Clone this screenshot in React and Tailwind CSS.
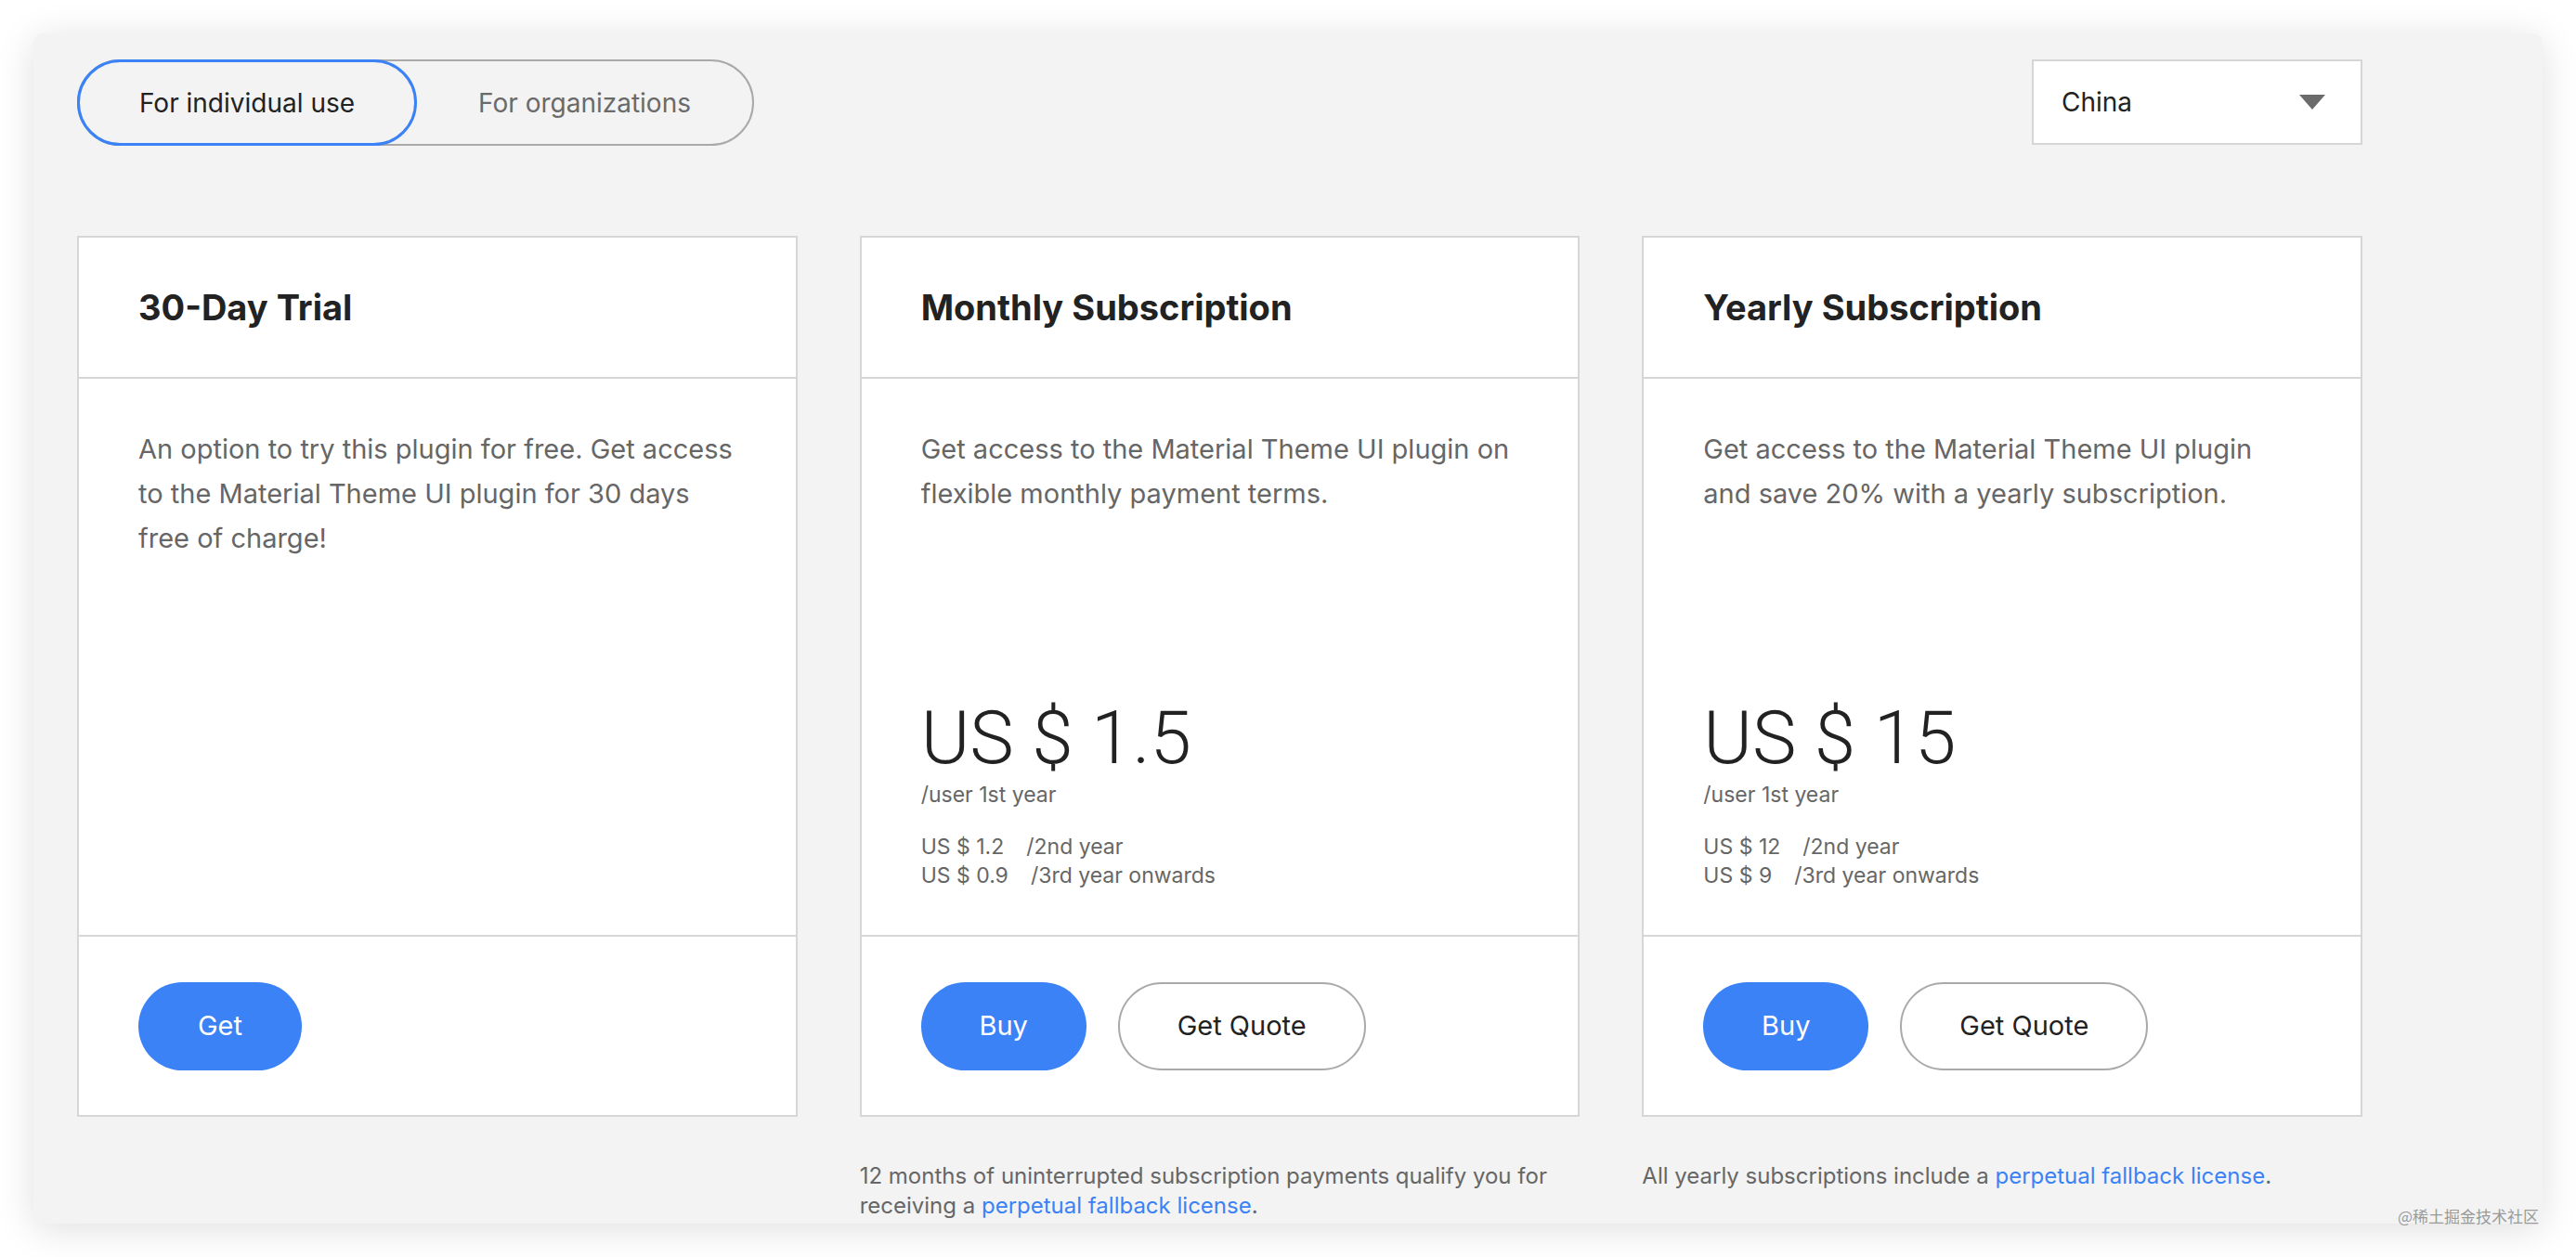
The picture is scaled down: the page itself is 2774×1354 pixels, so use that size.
const font = { fontFamily: "Inter, 'Noto Sans', sans-serif" };
const priceFont = { fontFamily: "Roboto, 'Noto Sans', sans-serif" };

function Toggle() {
  return (
    <div className="flex h-[93px] w-[729px] items-center rounded-full border-2 border-[#a9a9a9]">
      <button className="-ml-[2px] flex h-[93px] w-[366px] items-center justify-center rounded-full border-[3px] border-[#3b82f6] text-[28px] text-[#222]">
        For individual use
      </button>
      <span className="flex flex-1 justify-center text-[28px] text-[#6a6a6a]">For organizations</span>
    </div>
  );
}

function CountrySelect() {
  return (
    <div className="flex h-[92px] w-[356px] items-center justify-between border-2 border-[#d6d6d6] bg-white pl-[30px] pr-[38px]">
      <span className="text-[28px] text-[#222]">China</span>
      <svg width="28" height="16" viewBox="0 0 28 16">
        <polygon points="0,0 28,0 14,16" fill="#6b6b6b" />
      </svg>
    </div>
  );
}

function Card({ title, desc, price, extra, buttons }) {
  return (
    <div className="flex h-[949px] flex-col border-2 border-[#d6d6d6] bg-white">
      <div className="flex h-[152px] items-center border-b-2 border-[#d6d6d6] px-[64px]">
        <h2 className="text-[38px] font-bold text-[#222]">{title}</h2>
      </div>
      <div className="flex flex-1 flex-col justify-between px-[64px] pb-[48px] pt-[52px]">
        <p className="text-[29px] leading-[48px] text-[#666]">{desc}</p>
        {price && (
          <div>
            <div className="text-[80px] font-light leading-[90px] text-[#222]" style={priceFont}>
              {price}
            </div>
            <div className="text-[23px] leading-[32px] text-[#666]">/user 1st year</div>
            <div className="mt-[25px] text-[23px] leading-[31px] text-[#666]">
              {extra.map(([p, l]) => (
                <div key={l}>
                  <span>{p}</span>
                  <span className="ml-[24px]">{l}</span>
                </div>
              ))}
            </div>
          </div>
        )}
      </div>
      <div className="flex h-[194px] items-center gap-[34px] border-t-2 border-[#d6d6d6] px-[64px]">
        {buttons}
      </div>
    </div>
  );
}

function Primary({ children, w }) {
  return (
    <button className={`flex h-[95px] items-center justify-center rounded-full bg-[#3b82f6] text-[29px] text-white ${w}`}>
      {children}
    </button>
  );
}

function Quote() {
  return (
    <button className="flex h-[95px] w-[267px] items-center justify-center rounded-full border-2 border-[#a9a9a9] bg-white text-[29px] text-[#222]">
      Get Quote
    </button>
  );
}

export default function App() {
  return (
    <div className="relative min-h-screen bg-white p-[36px]" style={font}>
      <div className="h-[1282px] w-[2702px] overflow-hidden rounded-[10px] bg-[#f3f3f3] pl-[47px] pt-[28px] shadow-[0_6px_40px_rgba(0,0,0,0.13)]">
        <div className="w-[2461px]">
          <div className="flex items-start justify-between">
            <Toggle />
            <CountrySelect />
          </div>

          <div className="mt-[97px] grid grid-cols-3 gap-x-[67px]">
            <Card
              title="30-Day Trial"
              desc="An option to try this plugin for free. Get access to the Material Theme UI plugin for 30 days free of charge!"
              buttons={<Primary w="w-[176px]">Get</Primary>}
            />
            <Card
              title="Monthly Subscription"
              desc="Get access to the Material Theme UI plugin on flexible monthly payment terms."
              price="US $ 1.5"
              extra={[
                ["US $ 1.2", "/2nd year"],
                ["US $ 0.9", "/3rd year onwards"],
              ]}
              buttons={
                <>
                  <Primary w="w-[178px]">Buy</Primary>
                  <Quote />
                </>
              }
            />
            <Card
              title="Yearly Subscription"
              desc="Get access to the Material Theme UI plugin and save 20% with a yearly subscription."
              price="US $ 15"
              extra={[
                ["US $ 12", "/2nd year"],
                ["US $ 9", "/3rd year onwards"],
              ]}
              buttons={
                <>
                  <Primary w="w-[178px]">Buy</Primary>
                  <Quote />
                </>
              }
            />
          </div>

          <div className="mt-[48px] grid grid-cols-3 gap-x-[67px] text-[24px] leading-[32px] text-[#666]">
            <div />
            <p>
              12 months of uninterrupted subscription payments qualify you for receiving a{" "}
              <span className="text-[#3b82f6]">perpetual fallback license</span>.
            </p>
            <p>
              All yearly subscriptions include a{" "}
              <span className="text-[#3b82f6]">perpetual fallback license</span>.
            </p>
          </div>
        </div>
      </div>
      <span
        className="absolute left-[2582px] top-[1297px] text-[17px] text-[#9a9a9a]"
        style={{ fontFamily: "'Noto Sans CJK SC', sans-serif" }}
      >
        @稀土掘金技术社区
      </span>
    </div>
  );
}
